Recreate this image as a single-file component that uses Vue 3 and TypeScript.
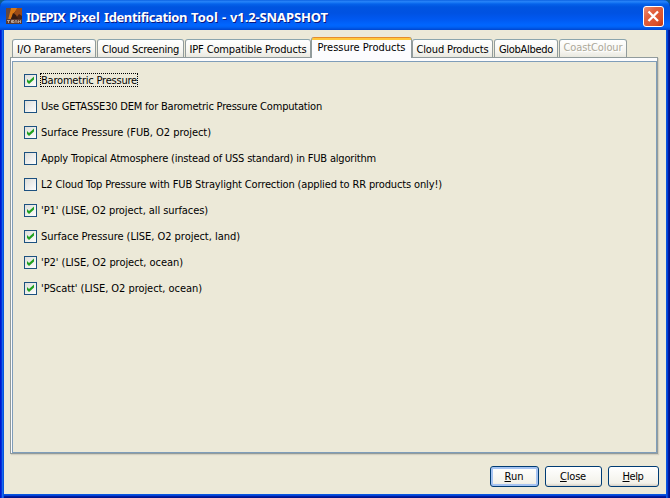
<script setup lang="ts">
import { ref, type Directive } from 'vue'

interface Tab { label: string; width: number; textWidth: number; gap: number; disabled?: boolean }
interface Option { label: string; width: number; checked: boolean }
interface Action { label: string; width: number; textWidth: number }

// Spreads the label's letters so the text takes exactly the given width.
const vFit: Directive<HTMLElement, number> = {
  mounted(el, { value }) {
    const length = (el.textContent ?? '').length
    const natural = el.getBoundingClientRect().width
    el.style.letterSpacing = `${(value - natural) / length}px`
  },
}

const titleParts = [
  { text: 'IDEPIX', width: 39 },
  { text: 'Pixel', width: 31 },
  { text: 'Identification', width: 83 },
  { text: 'Tool', width: 27 },
  { text: '-', width: 4 },
  { text: 'v1.2-SNAPSHOT', width: 98 },
]

const tabs: Tab[] = [
  { label: 'I/O Parameters', width: 84, textWidth: 74, gap: 1 },
  { label: 'Cloud Screening', width: 87, textWidth: 77, gap: 1 },
  { label: 'IPF Compatible Products', width: 126, textWidth: 117, gap: 0 },
  { label: 'Pressure Products', width: 101, textWidth: 88, gap: 0 },
  { label: 'Cloud Products', width: 81, textWidth: 72, gap: 1 },
  { label: 'GlobAlbedo', width: 64, textWidth: 54, gap: 1 },
  { label: 'CoastColour', width: 68, textWidth: 59, gap: 0, disabled: true },
]
const active = ref(3)

const options = ref<Option[]>([
  { label: 'Barometric Pressure', width: 96, checked: true },
  { label: 'Use GETASSE30 DEM for Barometric Pressure Computation', width: 281, checked: false },
  { label: 'Surface Pressure (FUB, O2 project)', width: 170, checked: true },
  { label: 'Apply Tropical Atmosphere (instead of USS standard) in FUB algorithm', width: 335, checked: false },
  { label: 'L2 Cloud Top Pressure with FUB Straylight Correction (applied to RR products only!)', width: 401, checked: false },
  { label: "'P1' (LISE, O2 project, all surfaces)", width: 167, checked: true },
  { label: 'Surface Pressure (LISE, O2 project, land)', width: 199, checked: true },
  { label: "'P2' (LISE, O2 project, ocean)", width: 142, checked: true },
  { label: "'PScatt' (LISE, O2 project, ocean)", width: 161, checked: true },
])

const actions: Action[] = [
  { label: 'Run', width: 49, textWidth: 19 },
  { label: 'Close', width: 57, textWidth: 26 },
  { label: 'Help', width: 51, textWidth: 21 },
]
</script>

<template>
  <div class="desktop">
    <div class="window">
      <header class="titlebar">
        <svg class="logo" width="16" height="16" viewBox="0 0 16 16">
          <rect width="16" height="16" fill="#4a2414" />
          <path d="M0 0H5L3 12H0Z" fill="#65483e" />
          <path d="M5 0H12L8 5L5 11L2 12Z" fill="#d77816" />
          <path d="M11 0H16V8L13 6L10 10L8 6Z" fill="#9a4b17" />
          <path d="M7 5L10 7L12 11H5Z" fill="#341b13" />
          <rect y="11" width="16" height="5" fill="#5c3a30" />
          <path d="M1 12.5H4M2.5 12.5V15M8 12.5H5.5V14.5H8M5.500 13.500H7.500M9 15V13L10 12.500L11 13V15M12.500 15V12.500L13.500 13.500L14.500 12.500V15" fill="none" stroke="#c9b7ad" stroke-width=".8" />
        </svg>
        <h1 class="title"><span v-for="p in titleParts" :key="p.text" v-fit="p.width">{{ p.text }}</span></h1>
        <button class="close" aria-label="Close">
          <svg width="21" height="21" viewBox="0 0 21 21">
            <defs>
              <linearGradient id="red" x2="1" y2="1">
                <stop offset="0" stop-color="#ee9078" />
                <stop offset=".35" stop-color="#e2623f" />
                <stop offset=".75" stop-color="#db5029" />
                <stop offset="1" stop-color="#bd3209" />
              </linearGradient>
            </defs>
            <rect x=".5" y=".5" width="20" height="20" rx="2.500" fill="url(#red)" stroke="#fff" />
            <path d="M5.500 5.500L15 15M15 5.500L5.500 15" stroke="#fff" stroke-width="2.300" />
          </svg>
        </button>
      </header>

      <main class="body">
        <nav class="tabs">
          <button
            v-for="(t, i) in tabs"
            :key="t.label"
            class="tab"
            :class="{ active: i === active, disabled: t.disabled }"
            :disabled="t.disabled"
            :style="{ width: t.width + 'px', marginRight: t.gap + 'px' }"
            @click="active = i"
          ><span v-fit="t.textWidth">{{ t.label }}</span></button>
        </nav>
        <section class="pane">
          <div class="inner">
            <label v-for="(o, i) in options" :key="o.label" class="option">
              <input v-model="o.checked" type="checkbox" class="native" />
              <svg class="box" width="13" height="13" viewBox="0 0 13 13">
                <defs>
                  <linearGradient id="boxFill" x2="1" y2="1">
                    <stop offset="0" stop-color="#dcdcd7" />
                    <stop offset="1" stop-color="#fff" />
                  </linearGradient>
                </defs>
                <rect x=".5" y=".5" width="12" height="12" fill="url(#boxFill)" stroke="#1c5180" />
                <path v-if="o.checked" d="M3 5L5 7L10 2.500V5.500L5 10L3 8Z" fill="#21a121" />
              </svg>
              <span class="caption" :class="{ focused: i === 0 }"><span v-fit="o.width">{{ o.label }}</span></span>
            </label>
          </div>
        </section>
        <footer class="actions">
          <button
            v-for="(a, i) in actions"
            :key="a.label"
            class="action"
            :class="{ primary: i === 0 }"
            :style="{ width: a.width + 'px' }"
          ><span v-fit="a.textWidth"><u>{{ a.label[0] }}</u>{{ a.label.slice(1) }}</span></button>
        </footer>
      </main>
    </div>
  </div>
</template>

<style>
body { margin: 0; overflow: hidden; }
</style>

<style scoped>
.desktop {
  width: 670px;
  height: 498px;
  background: #0d5a8c;
  font: 11px/14px "DejaVu Sans Condensed", "DejaVu Sans", sans-serif;
  color: #000;
}
.window {
  box-sizing: border-box;
  height: 498px;
  display: flex;
  flex-direction: column;
  border-radius: 7px 7px 0 0;
  overflow: hidden;
  background: linear-gradient(90deg, #0019cf 0 1px, #0831d9 1px 2px, #166aee 2px 3px, #0855dd 3px 4px, transparent 4px calc(100% - 4px), #0855dd calc(100% - 4px) calc(100% - 3px), #0441d8 calc(100% - 3px) calc(100% - 2px), #001da0 calc(100% - 2px) calc(100% - 1px), #00138c calc(100% - 1px)),
    linear-gradient(180deg, #0855dd 0 495px, #0441d8 495px 496px, #001da0 496px 497px, #00138c 497px);
}
.titlebar {
  height: 30px;
  flex: none;
  display: flex;
  align-items: center;
  box-sizing: border-box;
  padding: 3px 6px 0 6px;
  background: linear-gradient(180deg, #0058dc 0, #2a80f5 1px, #2080f8 2px, #0562ea 4px, #0054e0 7px, #0052e2 13px, #0058f0 19px, #0066ff 25px, #0062f5 27px, #0046cf 30px);
}
.logo { flex: none; margin-top: -1px; }
.title {
  margin: 0 0 0 4px;
  flex: 1;
  display: flex;
  gap: 4px;
  white-space: nowrap;
  color: #fff;
  font: bold 13px/18px "Noto Sans", "Open Sans", sans-serif;
  text-shadow: 1px 1px 0 #0a1883;
}
.close { flex: none; width: 21px; height: 21px; padding: 0; border: 0; background: none; }
.close svg { display: block; }
.body {
  flex: 1;
  min-height: 0;
  margin: 0 4px 4px;
  padding: 7px 8px 7px 6px;
  display: flex;
  flex-direction: column;
  background: #ece9d8;
}
.tabs {
  flex: none;
  height: 20px;
  display: flex;
  align-items: flex-end;
  padding-left: 2px;
}
.tab {
  box-sizing: border-box;
  height: 18px;
  padding: 2px 0 0;
  display: flex;
  justify-content: center;
  align-items: center;
  border: 1px solid #919b9c;
  border-top-color: #8ba5ad;
  border-bottom: 0;
  border-radius: 3px 3px 0 0;
  background: linear-gradient(#fff, #f5f4ef 70%, #e9e8df);
  font: inherit;
  color: inherit;
  white-space: nowrap;
}
.tab.active {
  height: 21px;
  margin-bottom: -1px;
  padding: 1px 0 0;
  border-top: 0;
  border-radius: 3px 3px 0 0;
  background: linear-gradient(#e68b2c 0 1px, #ffc73c 1px 3px, #fcfcfe 3px);
  z-index: 1;
}
.tab.disabled { color: #aca899; padding: 0 0 1px; text-shadow: 1px 1px 0 #fff; }
.pane {
  flex: 1;
  min-height: 0;
  display: flex;
  box-sizing: border-box;
  border: 1px solid #919b9c;
  background: #fcfcfe;
  padding: 3px 0 0 1px;
  box-shadow: 1px 1px 1px #d3d0c1;
}
.inner {
  flex: 1;
  box-sizing: border-box;
  border: 1px solid #7f9db9;
  background: #ece9d8;
  padding: 11px;
}
.option { display: flex; align-items: flex-start; height: 14px; margin-bottom: 12px; padding-top: 1px; box-sizing: border-box; }
.native { position: absolute; opacity: 0; pointer-events: none; }
.box { flex: none; }
.caption { margin-left: 4px; height: 14px; flex: none; white-space: nowrap; }
.focused { height: 12px; line-height: 14px; outline: 1px dotted #000; }
.actions { flex: none; display: flex; justify-content: flex-end; gap: 6px; padding-top: 12px; margin-right: -1px; }
.action {
  box-sizing: border-box;
  height: 21px;
  padding: 0 1px 0 0;
  border: 1px solid #003c74;
  border-radius: 3px;
  background: linear-gradient(#fff, #f3f2ea 85%, #d6d0c5);
  font: inherit;
  color: inherit;
}
.primary { box-shadow: inset 0 0 0 2px #a5c3f2, inset 0 -2px 0 #6982ee; }
u { text-underline-offset: 1px; text-decoration-thickness: 1px; }
</style>
